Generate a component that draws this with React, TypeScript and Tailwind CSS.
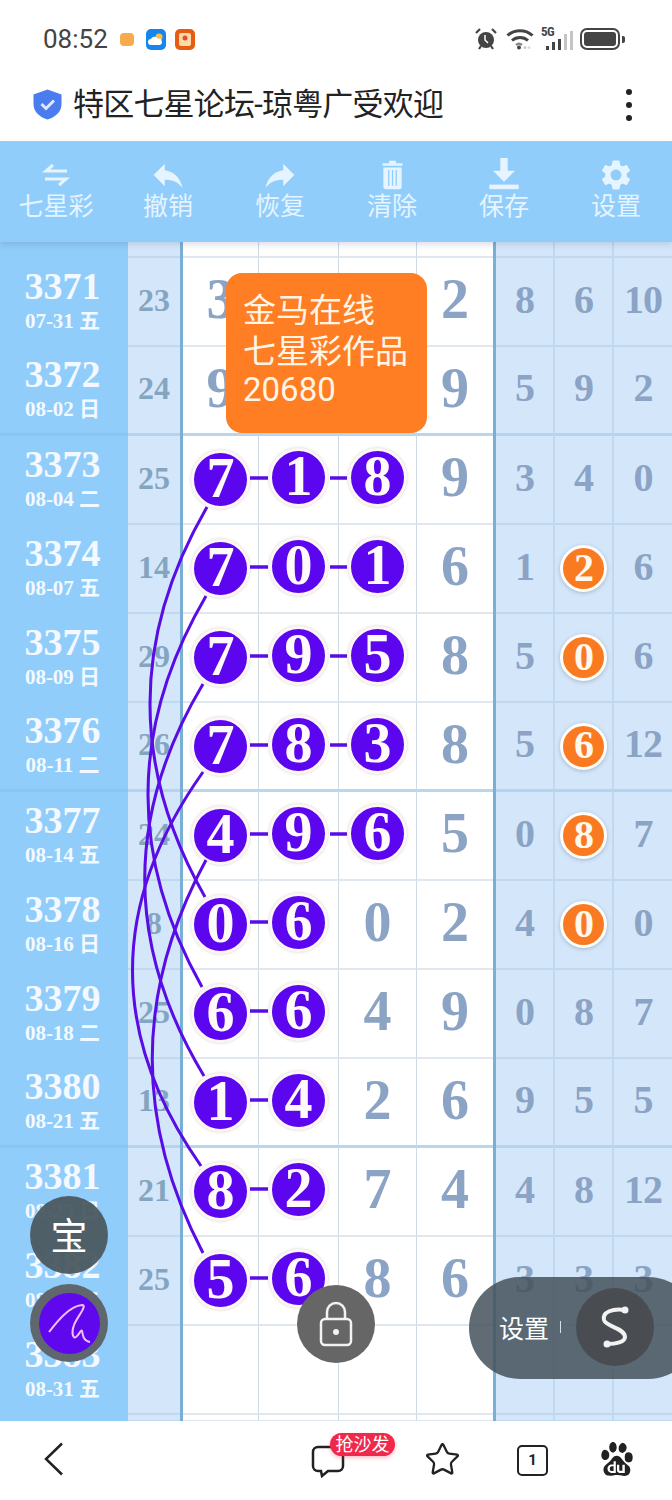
import React from 'react';
import { Star } from 'lucide-react';
import { SiBaidu } from 'react-icons/si';

interface RowData {
  issue?: string;
  date?: string;
  sum?: string;
  digits?: string[];
  tail?: string[];
  hot?: number; // how many leading digits are drawn as purple balls
  orange?: boolean; // middle tail number gets an orange ball
}

const rows: RowData[] = [
  { issue: '3371', date: '07-31 五', sum: '23', digits: ['3', '', '', '2'], tail: ['8', '6', '10'] },
  { issue: '3372', date: '08-02 日', sum: '24', digits: ['9', '', '', '9'], tail: ['5', '9', '2'] },
  { issue: '3373', date: '08-04 二', sum: '25', digits: ['7', '1', '8', '9'], tail: ['3', '4', '0'], hot: 3 },
  { issue: '3374', date: '08-07 五', sum: '14', digits: ['7', '0', '1', '6'], tail: ['1', '2', '6'], hot: 3, orange: true },
  { issue: '3375', date: '08-09 日', sum: '29', digits: ['7', '9', '5', '8'], tail: ['5', '0', '6'], hot: 3, orange: true },
  { issue: '3376', date: '08-11 二', sum: '26', digits: ['7', '8', '3', '8'], tail: ['5', '6', '12'], hot: 3, orange: true },
  { issue: '3377', date: '08-14 五', sum: '24', digits: ['4', '9', '6', '5'], tail: ['0', '8', '7'], hot: 3, orange: true },
  { issue: '3378', date: '08-16 日', sum: '8', digits: ['0', '6', '0', '2'], tail: ['4', '0', '0'], hot: 2, orange: true },
  { issue: '3379', date: '08-18 二', sum: '25', digits: ['6', '6', '4', '9'], tail: ['0', '8', '7'], hot: 2 },
  { issue: '3380', date: '08-21 五', sum: '13', digits: ['1', '4', '2', '6'], tail: ['9', '5', '5'], hot: 2 },
  { issue: '3381', date: '08-23 日', sum: '21', digits: ['8', '2', '7', '4'], tail: ['4', '8', '12'], hot: 2 },
  { issue: '3382', date: '08-28 二', sum: '25', digits: ['5', '6', '8', '6'], tail: ['3', '3', '3'], hot: 2 },
  { issue: '3383', date: '08-31 五' },
];

const Ball: React.FC<{ value: string; first?: boolean }> = ({ value, first }) => (
  <div
    className={`w-[59px] h-[59px] shrink-0 rounded-full bg-[#5b06ee] border-[3px] border-[#fdf6f6] shadow-[0_0_3px_rgba(120,100,60,0.3)] flex items-center justify-center pb-[3px] text-[#fffafa] text-[56px] leading-none font-bold ${first ? '' : 'mb-[4px]'}`}
  >
    {value}
  </div>
);

const Row: React.FC<{ data: RowData; thick: boolean; height: string }> = ({ data, thick, height }) => {
  const line = thick ? 'border-b-[3px] border-[#b9d6ec]' : 'border-b-[2px] border-[#e0e7ee]';
  const tailLine = thick ? 'border-b-[3px] border-[#b4d3ec]' : 'border-b-[2px] border-[#c0d9f0]';
  const leftLine = thick ? 'border-b-[3px] border-[#8cc5f0]' : 'border-b-[1px] border-[#95cef8]';
  return (
    <div className={`flex ${height} overflow-hidden`}>
      <div className={`w-[128px] shrink-0 bg-[#90cdfa] flex flex-col items-center justify-center pt-[1px] pr-[3px] text-[#f3f9ff] font-bold ${leftLine}`}>
        {data.issue && <div className="text-[38px] leading-[38px]">{data.issue}</div>}
        {data.date && <div className="text-[21px] leading-[33px]">{data.date}</div>}
      </div>
      <div className={`w-[52px] shrink-0 bg-[#d4e7fa] flex items-center justify-center pb-[4px] text-[#84a5c2] text-[32px] font-bold ${tailLine}`}>
        {data.sum}
      </div>
      <div className="w-[3px] shrink-0 bg-[#79afd4]" />
      {[0, 1, 2, 3].map((i) => (
        <div
          key={i}
          className={`${i === 0 ? 'w-[76px]' : i === 1 ? 'w-[80px]' : i === 2 ? 'w-[78px]' : 'w-[76px]'} shrink-0 bg-white flex items-center justify-center text-[#8ba3c4] text-[56px] font-bold ${i < 3 ? 'border-r-[1px] border-r-[#cfdae3]' : ''} ${line}`}
        >
          {data.digits &&
            (i < (data.hot ?? 0) ? (
              <Ball value={data.digits[i]} first={i === 0} />
            ) : (
              <span className="mb-[5px]">{data.digits[i]}</span>
            ))}
        </div>
      ))}
      <div className="w-[3px] shrink-0 bg-[#79afd4]" />
      {[0, 1, 2].map((i) => (
        <div
          key={i}
          className={`${i === 2 ? 'w-[58px]' : 'w-[59px] border-r-[2px] border-r-[#c0d9f0]'} shrink-0 bg-[#d4e7fa] flex items-center justify-center text-[#8ba3c4] text-[40px] tracking-[-1px] font-bold ${tailLine}`}
        >
          {data.tail &&
            (i === 1 && data.orange ? (
              <div className="w-[47px] h-[47px] rounded-full bg-[#f97a21] border-[3px] border-[#fffdf8] shadow-[0_1px_4px_rgba(70,90,120,0.35)] flex items-center justify-center pb-[2px] text-[#fff8ec] text-[40px] leading-none">
                {data.tail[i]}
              </div>
            ) : (
              <span className="mb-[4px]">{data.tail[i]}</span>
            ))}
        </div>
      ))}
    </div>
  );
};

const ToolItem: React.FC<{ label: string; children: React.ReactNode }> = ({ label, children }) => (
  <div className="w-[112px] flex flex-col items-center">
    <div className="h-[35px] flex items-center justify-center">{children}</div>
    <div className="text-[25px] leading-[30px] text-[#e6f4ff]">{label}</div>
  </div>
);

export default function App() {
  return (
    <div className="relative w-[672px] h-[1500px] overflow-hidden bg-white flex flex-col font-['Roboto','Noto_Sans_CJK_SC',sans-serif]">
      {/* status bar */}
      <div className="h-[70px] shrink-0 flex items-center pl-[43px] pr-[47px] pt-[8px]">
        <span className="text-[26px] text-[#444] mr-[12px]">08:52</span>
        <div className="w-[14px] h-[13px] rounded-[4px] bg-[#f7ab4c] mr-[12px]" />
        <svg width="20" height="21" viewBox="0 0 20 21" className="mr-[9px]">
          <rect width="20" height="21" rx="5" fill="#1685ee" />
          <circle cx="13" cy="8" r="3.500" fill="#f9c04a" />
          <path d="M5 16a3 3 0 0 1 0-6c1-2.500 5-3 6.500-.5 2-.5 4.500.5 4.500 3.500a3 3 0 0 1-3 3z" fill="#fff" />
        </svg>
        <svg width="20" height="21" viewBox="0 0 20 21">
          <rect width="20" height="21" rx="5" fill="#e85c10" />
          <rect x="4" y="4" width="12" height="13" rx="2" fill="#fdd8a8" />
          <circle cx="10" cy="9" r="2.500" fill="#e2502a" />
        </svg>
        <div className="ml-auto flex items-center">
          <svg width="22" height="22" viewBox="0 0 22 22" fill="#444" className="mr-[9px]">
            <circle cx="11" cy="12" r="8" />
            <path d="M1 5l4-4M21 5l-4-4M4 21l2-3M18 21l-2-3" stroke="#444" strokeWidth="2.200" />
            <path d="M10 7v5l3 3" stroke="#fff" strokeWidth="1.500" fill="none" />
          </svg>
          <svg width="28" height="22" viewBox="0 0 28 22" fill="none" stroke="#444" strokeWidth="3" className="mr-[7px]">
            <path d="M1.500 7.500C8.500 1 19.500 1 26.500 7.500" />
            <path d="M6 12.500c4.500-4 11.500-4 16 0" />
            <path d="M10 17c1.800-1.500 4.200-1.500 6 0" stroke="#888" strokeWidth="2.500" />
            <circle cx="13" cy="19.500" r="2" fill="#444" stroke="none" />
            <circle cx="19" cy="19.500" r="1.500" fill="#ccc" stroke="none" />
            <circle cx="23" cy="19.500" r="1.500" fill="#ddd" stroke="none" />
          </svg>
          <div className="relative w-[32px] h-[22px] mr-[7px]">
            <span className="absolute left-0 top-[-3px] text-[13px] leading-[13px] font-bold text-[#444] font-['Roboto_Condensed','Roboto',sans-serif] tracking-[-0.5px]">5G</span>
            <div className="absolute right-0 bottom-0 flex items-end gap-[3px]">
              <div className="w-[3px] h-[4px] bg-[#444]" />
              <div className="w-[3px] h-[8px] bg-[#444]" />
              <div className="w-[3px] h-[11px] bg-[#444]" />
              <div className="w-[3px] h-[16px] bg-[#c4c4c4]" />
              <div className="w-[3px] h-[19px] bg-[#c4c4c4]" />
            </div>
          </div>
          <div className="flex items-center">
            <div className="w-[40px] h-[22px] rounded-[7px] border-[2px] border-[#444] p-[2px]">
              <div className="w-full h-full rounded-[3px] bg-[#444]" />
            </div>
            <div className="w-[3px] h-[7px] rounded-r-[2px] bg-[#444] ml-[2px]" />
          </div>
        </div>
      </div>

      {/* address bar */}
      <div className="h-[71px] shrink-0 flex items-center pl-[33px] pr-[40px] pb-[2px]">
        <svg width="29" height="31" viewBox="0 0 29 31" className="mr-[11px]">
          <path d="M14.500 0.500L28.500 5.500V15c0 8-6 13-14 15.500C6.500 28 0.500 23 0.500 15V5.500z" fill="#4a7cf0" />
          <path d="M8.500 15l4.500 4.500 8-8" fill="none" stroke="#dfe9ff" strokeWidth="3" />
        </svg>
        <span className="text-[31px] leading-none tracking-[-0.8px] text-[#222]">特区七星论坛-琼粤广受欢迎</span>
        <div className="ml-auto flex flex-col gap-[7px]">
          <div className="w-[6px] h-[6px] rounded-full bg-[#222]" />
          <div className="w-[6px] h-[6px] rounded-full bg-[#222]" />
          <div className="w-[6px] h-[6px] rounded-full bg-[#222]" />
        </div>
      </div>

      {/* toolbar */}
      <div className="relative z-10 h-[101px] shrink-0 bg-[#90cdfb] flex pt-[16px] shadow-[0_3px_6px_rgba(70,90,120,0.18)]">
        <ToolItem label="七星彩">
          <svg width="28" height="24" viewBox="0 0 28 24" fill="none" stroke="#e6f4ff" strokeWidth="3">
            <path d="M25 8H4l7-6" />
            <path d="M3 16h21l-7 6" />
          </svg>
        </ToolItem>
        <ToolItem label="撤销">
          <svg width="32" height="32" viewBox="2 4 20 16" fill="#e6f4ff">
            <path d="M10 9V5l-7 7 7 7v-4.100c5 0 8.500 1.600 11 5.100-1-5-4-10-11-11z" />
          </svg>
        </ToolItem>
        <ToolItem label="恢复">
          <svg width="32" height="32" viewBox="2 4 20 16" fill="#e6f4ff">
            <path d="M14 9V5l7 7-7 7v-4.100c-5 0-8.500 1.600-11 5.100 1-5 4-10 11-11z" />
          </svg>
        </ToolItem>
        <ToolItem label="清除">
          <svg width="25" height="30" viewBox="0 0 28 36" fill="#e6f4ff">
            <path d="M2 4h8V1h8v3h8v3H2z" />
            <path d="M3 9h22v23a3 3 0 0 1-3 3H6a3 3 0 0 1-3-3z" />
            <path d="M9.500 12v19M14 12v19M18.500 12v19" stroke="#90cdfb" strokeWidth="1.500" />
          </svg>
        </ToolItem>
        <ToolItem label="保存">
          <svg width="32" height="33" viewBox="0 0 32 36" fill="#e6f4ff">
            <path d="M12 0h8v14h8L16 26 4 14h8z" />
            <path d="M0 29h32v5H0z" />
          </svg>
        </ToolItem>
        <ToolItem label="设置">
          <svg width="30" height="30" viewBox="2 2 20 20" fill="#e6f4ff">
            <path d="M19.140 12.940c.04-.3.060-.61.060-.94 0-.32-.02-.64-.07-.94l2.030-1.580a.49.49 0 0 0 .12-.61l-1.920-3.320a.488.488 0 0 0-.59-.22l-2.390.96c-.5-.38-1.030-.7-1.620-.94l-.36-2.540a.484.484 0 0 0-.48-.41h-3.840c-.24 0-.43.170-.47.410l-.36 2.540c-.59.240-1.130.570-1.620.94l-2.390-.96c-.22-.08-.47 0-.59.220L2.740 8.870c-.12.210-.08.470.12.610l2.030 1.580c-.05.3-.09.630-.09.940s.02.640.07.940l-2.030 1.580a.49.49 0 0 0-.12.610l1.920 3.320c.12.220.37.290.59.220l2.390-.96c.5.380 1.030.7 1.620.94l.36 2.540c.05.240.24.410.48.410h3.840c.24 0 .44-.17.47-.41l.36-2.540c.59-.24 1.130-.56 1.620-.94l2.390.96c.22.08.47 0 .59-.22l1.920-3.320c.12-.22.07-.47-.12-.61l-2.010-1.580zM12 15.600c-1.980 0-3.600-1.620-3.600-3.600s1.620-3.600 3.600-3.600 3.600 1.620 3.600 3.600-1.620 3.600-3.600 3.600z" />
          </svg>
        </ToolItem>
      </div>

      {/* chart table */}
      <div className="relative flex-1 overflow-hidden font-['Liberation_Serif','Noto_Sans_CJK_SC',serif]">
        <Row data={{}} thick={false} height="h-[16px]" />
        {rows.map((r, i) => (
          <Row key={r.issue} data={r} thick={i % 4 === 1} height="h-[89px]" />
        ))}
        <Row data={{}} thick={false} height="h-[7px]" />

        {/* lines joining the balls; coordinates are relative to the table, which starts at y=242 */}
        <svg className="absolute left-0 top-0 pointer-events-none" width="672" height="1179" viewBox="0 242 672 1179" fill="none" stroke="#5a0ce6" strokeWidth="3">
          {[478, 567, 656, 745, 834, 922, 1011, 1100, 1189, 1278].map((y) => (
            <path key={y} d={`M250 ${y}H268`} strokeWidth="3.500" />
          ))}
          {[478, 567, 656, 745, 834].map((y) => (
            <path key={y} d={`M330 ${y}H347`} strokeWidth="3.500" />
          ))}
          <path d="M207 507Q94 702 205 897" />
          <path d="M206 596Q92 791 202 987" />
          <path d="M203 684Q86 880 204 1076" />
          <path d="M203 772Q63 969 201 1166" />
          <path d="M206 860Q100 1056 203 1253" />
        </svg>

        {/* note popup */}
        <div className="absolute left-[226px] top-[31px] w-[201px] h-[160px] rounded-[16px] bg-[#ff7d23] pl-[17px] pt-[15px] text-[#fff5e6] text-[33px] leading-[40px] font-['Noto_Sans_CJK_SC',sans-serif]">
          <div>金马在线</div>
          <div className="mt-[1px]">七星彩作品</div>
          <div className="mt-[1px] font-['Roboto',sans-serif]">20680</div>
        </div>

        {/* floating buttons */}
        <div className="absolute left-[30px] top-[954px] w-[78px] h-[78px] rounded-full bg-[#4c5860]/95 flex items-center justify-center text-white text-[37px] font-['Noto_Sans_CJK_SC',sans-serif]">
          宝
        </div>
        <div className="absolute left-[30px] top-[1042px] w-[78px] h-[78px] rounded-full bg-[#5f666e] flex items-center justify-center">
          <div className="w-[61px] h-[61px] rounded-full bg-[#5f08ee] flex items-center justify-center">
            <svg width="61" height="61" viewBox="0 0 61 61" fill="none" stroke="#f3bdf7" strokeWidth="2">
              <path d="M10 39C17 30 30 13 43 12C49 12 38 24 35 32C32 40 34 46 37 44C40 42 42 36 43 38C44 42 44 48 51 49" />
            </svg>
          </div>
        </div>
        <div className="absolute left-[297px] top-[1043px] w-[78px] h-[78px] rounded-full bg-[#666] flex items-center justify-center">
          <svg width="34" height="46" viewBox="0 0 34 46" fill="none" stroke="#f2f2f2" strokeWidth="2.500">
            <rect x="2" y="18" width="30" height="26" rx="4" />
            <path d="M8 18v-7a9 9 0 0 1 18 0v7" />
            <circle cx="17" cy="31" r="3" fill="#f2f2f2" stroke="none" />
          </svg>
        </div>
        <div className="absolute left-[469px] top-[1035px] w-[230px] h-[102px] rounded-full bg-[#44515a]/85 flex items-center pl-[30px] pb-[2px] font-['Noto_Sans_CJK_SC',sans-serif]">
          <span className="text-white text-[25px] leading-none">设置</span>
          <div className="w-[1px] h-[12px] bg-[#ddd] ml-[11px]" />
          <div className="ml-[15px] w-[78px] h-[78px] rounded-full bg-[#494c50] flex items-center justify-center">
            <svg width="30" height="42" viewBox="0 0 30 42" fill="none" stroke="#f2f2f2" strokeWidth="4">
              <path d="M25 4C13 2 2 6 4 14c2 7 21 8 21 17c0 5-9 7-18 7" />
              <circle cx="25" cy="4" r="3.500" fill="#f2f2f2" stroke="none" />
              <circle cx="7" cy="38" r="3.500" fill="#f2f2f2" stroke="none" />
            </svg>
          </div>
        </div>
      </div>

      {/* bottom bar */}
      <div className="relative h-[79px] shrink-0 bg-white flex items-center pb-[3px]">
        <svg width="20" height="34" viewBox="0 0 20 34" fill="none" stroke="#222" strokeWidth="2.500" className="ml-[44px]">
          <path d="M18 1.500L2 17l16 15.500" />
        </svg>
        <div className="absolute left-[311px] top-[24px]">
          <svg width="34" height="33" viewBox="0 0 34 33" fill="none" stroke="#222" strokeWidth="2.500">
            <path d="M7 2h20a5 5 0 0 1 5 5v14a5 5 0 0 1-5 5H17l-6 5-1-5H7a5 5 0 0 1-5-5V7a5 5 0 0 1 5-5z" />
          </svg>
        </div>
        <div className="absolute left-[330px] top-[12px] w-[65px] h-[23px] rounded-full bg-[#f0294c] shadow-[0_2px_4px_rgba(240,41,76,0.3)] flex items-center justify-center text-white text-[18px] leading-none">
          抢沙发
        </div>
        <Star className="absolute left-[424px] top-[20px] text-[#222]" size={37} strokeWidth={1.500} />
        <div className="absolute left-[517px] top-[24px] w-[31px] h-[31px] rounded-[5px] border-[2.500px] border-[#222] flex items-center justify-center text-[15px] font-bold text-[#222]">
          1
        </div>
        <SiBaidu className="absolute left-[600px] top-[21px] text-[#222]" size={34} />
      </div>
    </div>
  );
}
